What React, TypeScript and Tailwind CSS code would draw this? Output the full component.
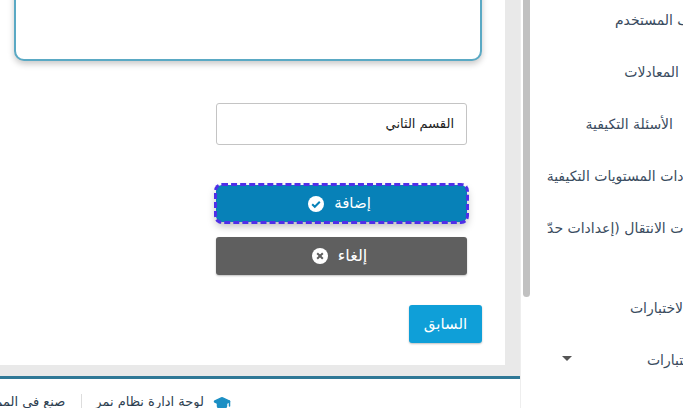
import { GraduationCap } from "lucide-react";

const font = "font-['DejaVu_Sans','Noto_Sans',sans-serif]";

function CheckCircle() {
  return (
    <svg width="16" height="16" viewBox="0 0 16 16" aria-hidden="true">
      <circle cx="8" cy="8" r="8" fill="#fff" />
      <path d="M4.2 8.2l2.6 2.6 5-5" fill="none" stroke="#0781b8" strokeWidth="2" />
    </svg>
  );
}

function XCircle() {
  return (
    <svg width="16" height="16" viewBox="0 0 16 16" aria-hidden="true">
      <circle cx="8" cy="8" r="8" fill="#fff" />
      <path d="M5.2 5.2l5.6 5.6M10.8 5.2l-5.6 5.6" fill="none" stroke="#5f5f5f" strokeWidth="2" />
    </svg>
  );
}

const items = [
  { t: "ملف المستخدم", c: "h-[52px]", m: "mr-[-21px]" },
  { t: "المعادلات", c: "h-[52px]", m: "mr-[4px]" },
  { t: "الأسئلة التكيفية", c: "h-[52px]", m: "mr-[10px]" },
  { t: "إعدادات المستويات التكيفية", c: "h-[52px]", m: "mr-[-24px]" },
  { t: "إعدادات الانتقال (إعدادات حدّ", c: "h-[80px] items-start pt-[16px]", m: "mr-[-34px]" },
  { t: "الاختبارات", c: "h-[52px]", m: "mr-[-4px]" },
];

export default function App() {
  return (
    <div className={`flex h-[408px] w-[683px] overflow-hidden bg-white text-[#2c3e50] ${font}`}>
      <div className="flex h-full w-[520px] shrink-0 flex-col">
        <div className="flex h-[376px] shrink-0 bg-[#e9e9e9]">
          <div className="relative flex h-[365px] w-[505px] flex-col items-start bg-white pl-[14px]">
            <div className="mt-[-20px] h-[81px] w-[468px] shrink-0 rounded-[10px] border-2 border-[#5aa9c4] bg-white shadow-[0_3px_6px_rgba(0,0,0,0.22)]" />
            <div className="mt-[42px] ml-[202px] flex h-[42px] w-[251px] shrink-0 items-center justify-end rounded-[3px] border border-[#c4c4c4] bg-white px-3 text-[13px] text-[#222]" dir="rtl">
              <span className="w-full text-right" dir="rtl">القسم الثاني</span>
            </div>
            <button className="mt-[40px] ml-[202px] flex h-[37px] w-[251px] shrink-0 items-center justify-center gap-[10px] rounded-[6px] bg-[#0781b8] pr-[4px] text-[15px] text-white shadow-[0_4px_8px_rgba(0,0,0,0.28)] outline-[3px] -outline-offset-1 outline-dashed outline-[#4f2fe8]">
              <CheckCircle />
              <span dir="rtl">إضافة</span>
            </button>
            <button className="mt-[15px] ml-[202px] flex h-[38px] w-[251px] shrink-0 items-center justify-center gap-[10px] rounded-[3px] bg-[#5f5f5f] pr-[4px] text-[16px] text-white shadow-[0_1px_2px_rgba(0,0,0,0.25)]">
              <XCircle />
              <span dir="rtl">إلغاء</span>
            </button>
            <button className="mt-[30px] ml-[395px] flex h-[38px] w-[73px] shrink-0 items-center justify-center rounded-[3px] bg-[#0f9fd8] text-[15px] text-white shadow-[0_1px_2px_rgba(0,0,0,0.25)]">
              <span dir="rtl">السابق</span>
            </button>
          </div>
        </div>
        <div className="h-[3px] shrink-0 bg-[#2f7896]" />
        <div className="flex h-[29px] shrink-0 items-start justify-end overflow-hidden pt-[15px] pr-[289px] text-[13px] leading-[16px] text-[#2c3e50]">
          <span className="shrink-0 whitespace-nowrap" dir="rtl">صنع في المملكة</span>
          <span className="ml-[16px] mr-[13px] h-[14px] w-px shrink-0 bg-[#ddd]" />
          <span className="shrink-0 whitespace-nowrap" dir="rtl">لوحة ادارة نظام نمر</span>
          <GraduationCap className="ml-[9px] shrink-0 text-[#1b8fc4]" size={18} fill="#1b8fc4" />
        </div>
      </div>
      <div className="flex h-full flex-1 border-l border-[#eeeeee]">
        <div className="ml-[2px] h-[297px] w-[7px] shrink-0 rounded-b-[4px] bg-[#c1c1c1]" />
        <div className="relative flex flex-1 flex-col overflow-hidden">
          <div className="mt-[-6px] flex flex-col items-end text-[14px] text-[#3a4c60]">
            {items.map((it) => (
              <div key={it.t} className={`flex w-full items-center justify-end ${it.c}`}>
                <span className={`shrink-0 whitespace-nowrap ${it.m}`} dir="rtl">{it.t}</span>
              </div>
            ))}
            <div className="flex h-[52px] w-full items-center justify-end">
              <span className="mr-auto mb-[4px] ml-[32px] h-0 w-0 border-x-[5px] border-t-[5px] border-x-transparent border-t-[#555]" />
              <span className="mr-[-21px] shrink-0 whitespace-nowrap" dir="rtl">الاختبارات</span>
            </div>
          </div>
        </div>
      </div>
    </div>
  );
}
